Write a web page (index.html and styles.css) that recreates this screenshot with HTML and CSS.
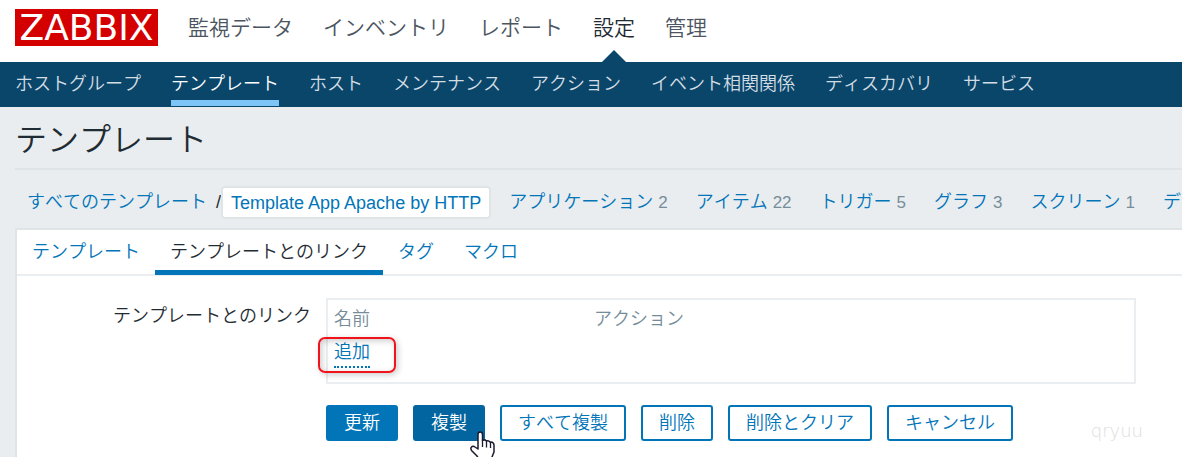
FILE: index.html
```
<!DOCTYPE html>
<html lang="ja">
<head>
    <meta charset="UTF-8">
    <meta name="viewport" content="width=device-width, initial-scale=1.0">
    <title>テンプレートの設定</title>
    <link rel="stylesheet" href="styles.css">
</head>
<body>
    <!-- Main menu -->
    <header class="top-nav">
        <a class="logo" href="#">ZABBIX</a>
        <nav class="main-menu">
            <a href="#">監視データ</a>
            <a href="#">インベントリ</a>
            <a href="#">レポート</a>
            <a class="selected" href="#">設定</a>
            <a href="#">管理</a>
        </nav>
    </header>

    <nav class="sub-nav">
        <a href="#">ホストグループ</a>
        <a class="selected" href="#">テンプレート</a>
        <a href="#">ホスト</a>
        <a href="#">メンテナンス</a>
        <a href="#">アクション</a>
        <a href="#">イベント相関関係</a>
        <a href="#">ディスカバリ</a>
        <a href="#">サービス</a>
    </nav>

    <main class="article">
        <h1>テンプレート</h1>

        <!-- Template navigation -->
        <div class="filter-breadcrumb">
            <a href="#">すべてのテンプレート</a>
            <span class="slash">/</span>
            <a class="current" href="#">Template App Apache by HTTP</a>
            <ul class="object-list">
                <li><a href="#">アプリケーション</a> <sup>2</sup></li>
                <li><a href="#">アイテム</a> <sup>22</sup></li>
                <li><a href="#">トリガー</a> <sup>5</sup></li>
                <li><a href="#">グラフ</a> <sup>3</sup></li>
                <li><a href="#">スクリーン</a> <sup>1</sup></li>
                <li><a href="#">ディスカバリルール</a></li>
            </ul>
        </div>

        <div class="card">
            <nav class="tabs">
                <a href="#">テンプレート</a>
                <a class="active" href="#">テンプレートとのリンク</a>
                <a href="#">タグ</a>
                <a href="#">マクロ</a>
            </nav>

            <form class="form-grid">
                <div class="form-label" id="link-label">テンプレートとのリンク</div>
                <div class="table-box">
                    <table aria-labelledby="link-label">
                        <thead>
                            <tr>
                                <th class="col-name">名前</th>
                                <th>アクション</th>
                            </tr>
                        </thead>
                        <tbody>
                            <tr>
                                <td colspan="2">
                                    <span class="add-cell">
                                        <button type="button" class="btn-link">追加</button>
                                        <span class="highlight"></span>
                                    </span>
                                </td>
                            </tr>
                        </tbody>
                    </table>
                </div>
                <div class="buttons">
                    <button type="submit" class="btn primary">更新</button>
                    <button type="button" class="btn primary hover">複製
                        <svg class="cursor" width="28" height="32" viewBox="0 0 28 32" aria-hidden="true">
                            <path d="M10 19V4.500Q10 2 12.200 2Q14.500 2 14.500 4.500V10.500Q16.500 9 18.500 11Q20.500 10 22 12Q25.500 11.500 26 15V22L24 27V31H12L9 26L4 21Q2 18.500 3.500 17Q5 15.500 7 17Z" fill="#fff" stroke="#1a1a2e" stroke-width="1.500" stroke-linejoin="round"/>
                            <path d="M14.500 10V17M18.500 11V17.500M22.500 12V18" fill="none" stroke="#1a1a2e" stroke-width="1.300"/>
                        </svg>
                    </button>
                    <button type="button" class="btn">すべて複製</button>
                    <button type="button" class="btn">削除</button>
                    <button type="button" class="btn">削除とクリア</button>
                    <button type="button" class="btn">キャンセル</button>
                </div>
            </form>
            <span class="watermark">qryuu</span>
        </div>
    </main>
</body>
</html>
```
FILE: styles.css
```
* {
    box-sizing: border-box;
}

body {
    margin: 0;
    min-height: 100vh;
    display: flex;
    flex-direction: column;
    background: #e9edf0;
    color: #1f2c33;
    font-family: "Liberation Sans", "Noto Sans CJK JP", sans-serif;
    font-size: 18px;
    font-weight: 350;
    font-kerning: none;
    line-height: 24px;
    overflow: hidden;
}

a {
    color: #0275b8;
    text-decoration: none;
    white-space: nowrap;
}

/* Main menu */
.top-nav {
    display: flex;
    align-items: center;
    gap: 30px;
    height: 62px;
    padding: 0 15px 7px;
    background: #fff;
}

.logo {
    width: 143px;
    height: 37px;
    background: #d40000;
    color: #fff;
    font-family: "DejaVu Sans", sans-serif;
    font-size: 36px;
    font-weight: 400;
    line-height: 37px;
    text-align: center;
}

.main-menu {
    display: flex;
    gap: 30px;
    font-size: 21px;
}

.main-menu a {
    position: relative;
    color: #4c5561;
}

.main-menu .selected {
    color: #1f2c33;
}

.main-menu .selected::after {
    content: "";
    position: absolute;
    left: 50%;
    bottom: -23px;
    margin-left: -13px;
    border: 13px solid transparent;
    border-top: 0;
    border-bottom-color: #0a466a;
}

/* Sub menu */
.sub-nav {
    display: flex;
    gap: 30px;
    height: 45px;
    padding: 0 15px 1px;
    background: #0a466a;
}

.sub-nav a {
    padding-top: 10px;
    border-bottom: 6px solid transparent;
    color: #d3dde4;
}

.sub-nav .selected {
    border-bottom-color: #7dc5f7;
    color: #fff;
}

/* Page content */
.article {
    flex: 1;
    display: flex;
    flex-direction: column;
    padding-left: 15px;
}

h1 {
    margin: 0;
    padding: 13px 0 8px;
    border-bottom: 2px solid #dfe4e7;
    font-size: 32px;
    font-weight: 350;
    line-height: 40px;
}

.filter-breadcrumb {
    display: flex;
    align-items: center;
    height: 58px;
    padding: 6px 0 0 12px;
    overflow: hidden;
}

.slash {
    padding-left: 9px;
}

.current {
    padding: 3px 8px 1px;
    background: #fff;
    border: 2px solid #dfe4e7;
    border-radius: 4px;
    font-kerning: normal;
    line-height: 25px;
}

.object-list {
    display: flex;
    gap: 28px;
    margin: 0;
    padding: 0 0 0 18px;
    list-style: none;
    white-space: nowrap;
}

.object-list sup {
    color: #768d99;
    font-size: 17px;
    line-height: 24px;
    vertical-align: baseline;
}

.card {
    position: relative;
    flex: 1;
    overflow: hidden;
    background: #fff;
    border-top: 2px solid #dfe4e7;
    border-left: 2px solid #dfe4e7;
}

.tabs {
    display: flex;
    height: 46px;
    border-bottom: 2px solid #ebeef0;
}

.tabs a {
    height: 45px;
    padding: 10px 15px 0;
}

.tabs .active {
    border-bottom: 5px solid #0275b8;
    color: #1f2c33;
}

/* Form */
.form-grid {
    display: grid;
    grid-template-columns: 294px 1fr;
    column-gap: 15px;
    row-gap: 21px;
    padding: 22px 46px 16px 0;
}

.form-label {
    padding-top: 6px;
    text-align: right;
}

.table-box {
    padding: 7px 6px 14px;
    border: 2px solid #ebeef0;
}

table {
    width: 100%;
    border-collapse: collapse;
    table-layout: fixed;
}

th,
td {
    padding: 0 0 9px;
    font-weight: 350;
    text-align: left;
}

th {
    color: #768d99;
}

td {
    padding-bottom: 0;
}

.col-name {
    width: 260px;
}

.add-cell {
    position: relative;
    display: inline-block;
    vertical-align: top;
}

.btn-link {
    display: block;
    padding: 0 0 2px;
    background: none;
    border: 0;
    border-bottom: 2px dotted #0275b8;
    color: #0275b8;
    font: inherit;
    font-kerning: none;
    line-height: 24px;
}

/* Call-out frame round the add link */
.highlight {
    position: absolute;
    inset: -3px -26px -5px -16px;
    border: 2px solid #f0141a;
    border-radius: 7px;
    box-shadow: 2px 2px 6px rgba(0, 0, 0, 0.2), inset 2px 2px 6px rgba(0, 0, 0, 0.2);
    pointer-events: none;
}

.buttons {
    grid-column: 2;
    display: flex;
    gap: 15px;
}

.btn {
    position: relative;
    height: 36px;
    padding: 0 16px;
    background: #fff;
    border: 2px solid #0275b8;
    border-radius: 3px;
    color: #0275b8;
    font: inherit;
    font-kerning: none;
    line-height: 24px;
    white-space: nowrap;
}

.btn.primary {
    background: #0275b8;
    color: #fff;
}

.btn.hover {
    background: #02659f;
    border-color: #02659f;
}

.cursor {
    position: absolute;
    top: 23px;
    left: 53px;
}

.watermark {
    position: absolute;
    right: 39px;
    bottom: 14px;
    color: #dedede;
    font-family: "DejaVu Sans", sans-serif;
    font-weight: 200;
}
```
